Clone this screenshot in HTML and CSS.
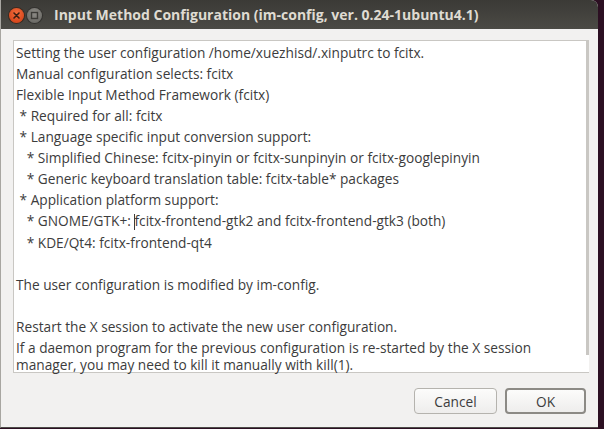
FILE: index.html
```html
<!DOCTYPE html>
<html>
<head>
<meta charset="utf-8">
<link rel="stylesheet" href="styles.css">
</head>
<body>
<div class="window">
  <div class="titlebar">
    <div class="wbtn close"><svg width="15" height="15" viewBox="0 0 15 15"><path d="M5 5 L10 10 M10 5 L5 10" stroke="#3a1e12" stroke-width="1.6" stroke-linecap="round"/></svg></div>
    <div class="wbtn max"><svg width="15" height="15" viewBox="0 0 15 15"><rect x="4.5" y="4.5" width="6" height="6" fill="none" stroke="#3c3b37" stroke-width="1.4"/></svg></div>
    <div class="title">Input Method Configuration (im-config, ver. 0.24-1ubuntu4.1)</div>
  </div>
  <div class="body">
    <div class="textbox">
      <div class="scroll"></div>
      <p class="para">Setting the user configuration /home/xuezhisd/.xinputrc to fcitx.</p>
      <p class="para">Manual configuration selects: fcitx</p>
      <p class="para">Flexible Input Method Framework (fcitx)</p>
      <p class="para"> * Required for all: fcitx</p>
      <p class="para"> * Language specific input conversion support:</p>
      <p class="para">   * Simplified Chinese: fcitx-pinyin or fcitx-sunpinyin or fcitx-googlepinyin</p>
      <p class="para">   * Generic keyboard translation table: fcitx-table* packages</p>
      <p class="para"> * Application platform support:</p>
      <p class="para">   * GNOME/GTK+: <span class="caret"></span>fcitx-frontend-gtk2 and fcitx-frontend-gtk3 (both)</p>
      <p class="para">   * KDE/Qt4: fcitx-frontend-qt4</p>
      <p class="para"> </p>
      <p class="para">The user configuration is modified by im-config.</p>
      <p class="para"> </p>
      <p class="para">Restart the X session to activate the new user configuration.</p>
      <p class="para">If a daemon program for the previous configuration is re-started by the X session manager, you may need to kill it manually with kill(1).</p>
    </div>
    <div class="buttons">
      <button class="btn">Cancel</button>
      <button class="btn default">OK</button>
    </div>
  </div>
</div>
</body>
</html>
```

FILE: styles.css
```css
html, body {
  margin: 0;
  padding: 0;
}
body {
  background: #2c0f22;
  width: 604px;
  height: 429px;
  overflow: hidden;
  font-family: "Open Sans", "Noto Sans", "DejaVu Sans", sans-serif;
}
.window {
  width: 597px;
  height: 427px;
  border-left: 1px solid #a8a6a1;
  border-bottom: 1px solid #4d4c48;
  border-radius: 0 7px 0 0;
  overflow: hidden;
  background: #f2f1f0;
  display: flex;
  flex-direction: column;
}
.titlebar {
  height: 29px;
  flex: none;
  background: linear-gradient(#3b3a36, #4b4a45);
  display: flex;
  align-items: center;
  padding-left: 8px;
  padding-top: 2px;
  box-sizing: border-box;
}
.wbtn {
  width: 15px;
  height: 15px;
  border-radius: 50%;
  display: flex;
  align-items: center;
  justify-content: center;
  margin-right: 3px;
}
.close {
  background: radial-gradient(circle at 50% 35%, #f26d3d, #d9481c 70%, #b83c15);
  box-shadow: 0 0 0 1px #3a2a20;
}
.max {
  background: radial-gradient(circle at 50% 35%, #8d8b86, #6f6e69 70%, #5c5b57);
  box-shadow: 0 0 0 1px #33322f;
}
.title {
  margin-left: 9px;
  color: #dfdbd2;
  font-weight: bold;
  font-size: 14px;
  margin-top: -2px;
  white-space: nowrap;
}
.body {
  flex: 1;
  display: flex;
  flex-direction: column;
  padding: 11px 9px 0 12px;
}
.textbox {
  position: relative;
  height: 333px;
  box-sizing: border-box;
  background: #fff;
  border: 1px solid #c9c7c3;
  border-right: none;
  padding: 3px 4px 0 2px;
  color: #3c3c3c;
  font-size: 13.7px;
  line-height: 17px;
}
.scroll {
  position: absolute;
  right: 0;
  top: 0;
  width: 3px;
  height: 314px;
  background: #c9c7c3;
}
.para {
  margin: 0 0 4px 0;
  white-space: pre-wrap;
  min-height: 17px;
}
.caret {
  display: inline-block;
  width: 1px;
  height: 16px;
  background: #3c3c3c;
  vertical-align: -4px;
  margin-right: -1px;
}
.buttons {
  display: flex;
  justify-content: flex-end;
  gap: 8px;
  margin-top: 15px;
  padding-right: 3px;
}
.btn {
  width: 83px;
  height: 26px;
  box-sizing: border-box;
  border: 1px solid #b5b3ae;
  border-radius: 4px;
  background: linear-gradient(#fcfcfb, #eeedec);
  font-family: inherit;
  font-size: 13.7px;
  color: #3c3c3c;
  padding: 0;
}
.default {
  border: 2px solid #8c8a85;
  width: 81px;
}
```
